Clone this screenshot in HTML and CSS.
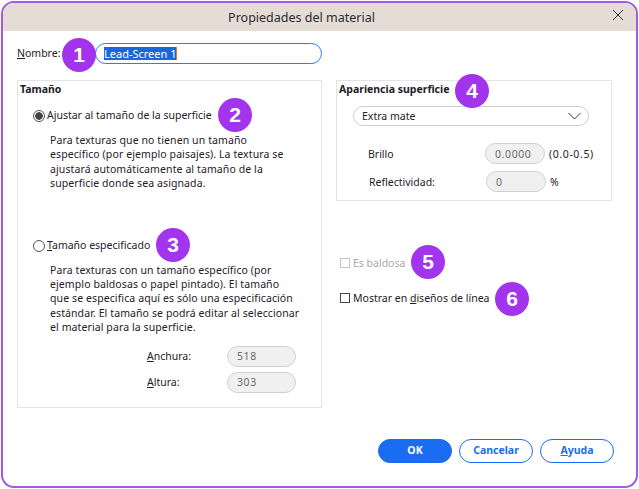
FILE: index.html
```html
<!DOCTYPE html>
<html lang="es">
<head>
<meta charset="utf-8">
<title>Propiedades del material</title>
<link rel="stylesheet" href="styles.css">
</head>
<body>
<div class="window">
  <header class="titlebar">
    <span class="title">Propiedades del material</span>
    <svg class="close" width="12" height="12" viewBox="0 0 12 12"><path d="M1 1L11 11M11 1L1 11" stroke="#333" stroke-width="1" fill="none"/></svg>
  </header>
  <div class="content">
    <div class="name-row">
      <label class="name-label"><u>N</u>ombre:</label>
      <div class="name-input"><span class="selected">Lead-Screen 1</span><span class="caret"></span></div>
    </div>
    <div class="columns">
      <section class="panel left">
        <h2 class="heading">Tamaño</h2>
        <div class="radio-row first"><span class="radio on"></span><span>Ajustar al tamaño de la superficie</span></div>
        <p class="desc">Para texturas que no tienen un tamaño<br>específico (por ejemplo paisajes). La textura se<br>ajustará automáticamente al tamaño de la<br>superficie donde sea asignada.</p>
        <div class="radio-row second"><span class="radio"></span><span><u>T</u>amaño especificado</span></div>
        <p class="desc">Para texturas con un tamaño específico (por<br>ejemplo baldosas o papel pintado). El tamaño<br>que se especifica aquí es sólo una especificación<br>estándar. El tamaño se podrá editar al seleccionar<br>el material para la superficie.</p>
        <div class="size-fields">
          <label class="size-label"><u>A</u>nchura:</label><div class="field size-input">518</div>
          <label class="size-label"><u>A</u>ltura:</label><div class="field size-input">303</div>
        </div>
      </section>
      <div class="right">
        <section class="panel look">
          <h2 class="heading">Apariencia superficie</h2>
          <div class="select"><span>Extra mate</span>
            <svg width="13" height="8" viewBox="0 0 13 8"><path d="M0.5 1L6.5 7L12.5 1" stroke="#333" stroke-width="1" fill="none"/></svg>
          </div>
          <div class="look-row bright"><span class="look-label">Brillo</span><div class="field look-input">0.0000</div><span class="range">(0.0-0.5)</span></div>
          <div class="look-row reflect"><span class="look-label">Reflectividad:</span><div class="field look-input">0</div><span>%</span></div>
        </section>
        <div class="check-row disabled"><span class="check"></span><span>Es baldosa</span></div>
        <div class="check-row lines"><span class="check"></span><span>Mostrar en <u>d</u>iseños de línea</span></div>
      </div>
    </div>
    <div class="buttons">
      <button class="btn primary">OK</button>
      <button class="btn">Cancelar</button>
      <button class="btn"><u>A</u>yuda</button>
    </div>
  </div>
  <span class="badge b1">1</span>
  <span class="badge b2">2</span>
  <span class="badge b3">3</span>
  <span class="badge b4">4</span>
  <span class="badge b5">5</span>
  <span class="badge b6">6</span>
</div>
</body>
</html>
```
FILE: styles.css
```css
* { box-sizing: border-box; }
html, body { margin: 0; padding: 0; }
body {
  width: 639px;
  height: 489px;
  padding: 1px;
  background: #fff;
  font-family: "Noto Sans", "Open Sans", sans-serif;
  font-size: 10.5px;
  color: #1f2028;
  overflow: hidden;
}
u { text-underline-offset: 1px; }
.window {
  position: relative;
  width: 637px;
  height: 487px;
  border: 2px solid #a855e8;
  border-radius: 13px;
  background: #fff;
  overflow: hidden;
  display: flex;
  flex-direction: column;
}
.titlebar {
  position: relative;
  flex: none;
  height: 28px;
  padding-right: 36px;
  background: #e6dcd6;
  display: flex;
  align-items: center;
  justify-content: center;
}
.title { font-size: 12.5px; color: #2a2a30; }
.close { position: absolute; top: 6px; right: 12px; }
.content { flex: 1; padding: 12px 0 0 14px; display: flex; flex-direction: column; }
.name-row { display: flex; align-items: center; height: 21px; }
.name-label { width: 78px; padding-bottom: 2px; }
.name-input {
  width: 227px;
  height: 21px;
  border: 1px solid #2f7bf0;
  border-radius: 11px;
  padding-left: 8px;
  display: flex;
  align-items: center;
  font-size: 11px;
}
.selected { background: #1a68d8; color: #fff; line-height: 13px; }
.caret { width: 1px; height: 13px; background: #e8781a; }
.columns { display: flex; gap: 14px; margin-top: 16px; }
.panel { border: 1px solid #e4e4e6; }
.left { width: 305px; height: 328px; padding: 1px 0 0 2px; }
.right { width: 276px; }
.heading { margin: 0; font-size: 10.5px; font-weight: 700; line-height: 15px; }
.radio-row { display: flex; align-items: center; gap: 2px; margin-left: 13px; height: 14px; }
.radio-row.first { margin-top: 11px; }
.radio-row.second { margin-top: 47px; }
.radio {
  width: 12px;
  height: 12px;
  border: 1px solid #555;
  border-radius: 50%;
  background: #fff;
  flex: none;
  margin-top: 2px;
}
.radio.on { background: radial-gradient(circle, #444 0 3.5px, #fff 4px); }
.desc { margin: 11px 0 0 30px; line-height: 14.4px; white-space: nowrap; letter-spacing: 0.1px; }
.size-fields {
  display: grid;
  grid-template-columns: 80px 69px;
  grid-auto-rows: 21px;
  row-gap: 5px;
  align-items: center;
  margin: 11px 0 0 127px;
}
.field {
  background: #f0f0f0;
  border: 1px solid #cfcfcf;
  border-radius: 11px;
  height: 21px;
  color: #6a6a6a;
  letter-spacing: 0.6px;
  display: flex;
  align-items: center;
}
.size-input { padding-left: 9px; }
.look { height: 121px; padding: 1px 0 0 2px; }
.select {
  width: 236px;
  height: 20px;
  margin: 9px 0 0 14px;
  border: 1px solid #cfcfcf;
  border-radius: 10px;
  padding: 0 7px 0 8px;
  display: flex;
  align-items: center;
  justify-content: space-between;
}
.look-row { display: flex; align-items: center; gap: 4px; height: 21px; }
.bright { margin: 17px 0 0 29px; }
.reflect { margin: 7px 0 0 30px; }
.look-label { width: 113px; flex: none; }
.look-input { width: 60px; justify-content: flex-start; padding-left: 9px; }
.range { letter-spacing: 0.6px; }
.check-row { display: flex; align-items: center; gap: 3px; margin-left: 4px; height: 14px; }
.check {
  width: 10px;
  height: 10px;
  border: 1px solid #444;
  background: #fff;
  flex: none;
}
.disabled { color: #a8a8a8; margin-top: 55px; }
.disabled .check { border-color: #c4c4c4; }
.lines { margin-top: 21px; }
.buttons { display: flex; justify-content: flex-end; gap: 7px; margin: 31px 8px 0 0; padding-right: 14px; }
.btn {
  width: 74px;
  height: 24px;
  border: 1px solid #1a6cf0;
  border-radius: 12px;
  background: #fff;
  color: #1a6cf0;
  font: 700 10.5px "Noto Sans", "Open Sans", sans-serif;
  padding: 0 0 2px;
}
.btn.primary { background: #1a6cf0; color: #fff; }
.badge {
  position: absolute;
  width: 34px;
  height: 34px;
  border-radius: 50%;
  background: #a334ee;
  color: #fff;
  font: 700 21px "Liberation Sans", sans-serif;
  display: flex;
  align-items: center;
  justify-content: center;
}
.b1 { left: 59px; top: 35px; }
.b2 { left: 215px; top: 95px; }
.b3 { left: 153px; top: 225px; }
.b4 { left: 452px; top: 71px; }
.b5 { left: 408px; top: 242px; }
.b6 { left: 492px; top: 279px; }
```
